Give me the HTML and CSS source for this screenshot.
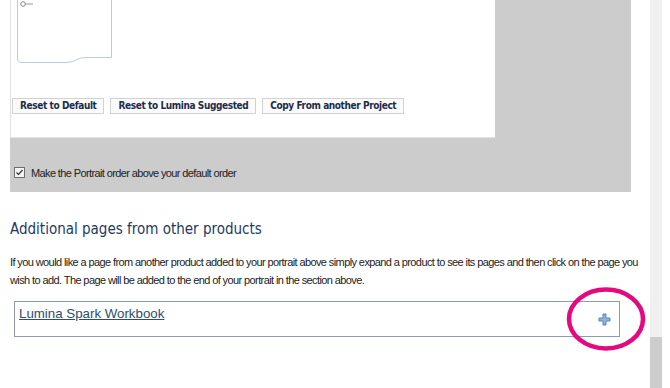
FILE: index.html
```html
<!DOCTYPE html>
<html>
<head>
<meta charset="utf-8">
<link rel="stylesheet" href="styles.css">
</head>
<body>
<div class="page">
  <div class="main">
    <div class="grey-panel">
      <div class="white-box">
        <div class="thumb">
          <svg width="97" height="64" viewBox="0 0 97 64">
            <path d="M1.5 0 V58 Q1.5 62.5 6 62.5 H50 Q57 62.5 61 59.5 Q65 57.5 70 57.5 H95.5 V0" fill="#fff" stroke="#bfcad4" stroke-width="1"/>
            <circle cx="7" cy="4" r="2.3" fill="none" stroke="#8a8a8a" stroke-width="1"/>
            <line x1="9" y1="4" x2="17" y2="4" stroke="#9a9a9a" stroke-width="1"/>
          </svg>
        </div>
        <div class="btn-row">
          <button class="btn">Reset to Default</button>
          <button class="btn">Reset to Lumina Suggested</button>
          <button class="btn">Copy From another Project</button>
        </div>
      </div>
      <label class="check-row">
        <span class="checkbox">
          <svg width="9" height="9" viewBox="0 0 9 9"><path d="M1.5 4.5 L3.5 6.5 L7.5 2" fill="none" stroke="#333" stroke-width="1.2"/></svg>
        </span>
        <span class="check-text">Make the Portrait order above your default order</span>
      </label>
    </div>

    <h2 class="heading">Additional pages from other products</h2>
    <p class="intro">If you would like a page from another product added to your portrait above simply expand a product to see its pages and then click on the page you wish to add. The page will be added to the end of your portrait in the section above.</p>

    <div class="product">
      <a class="product-link" href="#">Lumina Spark Workbook</a>
      <span class="plus-wrap">
        <svg class="plus" width="13" height="13" viewBox="0 0 13 13">
          <path d="M5 1 H8 V5 H12 V8 H8 V12 H5 V8 H1 V5 H5 Z" fill="#8fb3da" stroke="#5d86b5" stroke-width="1"/>
        </svg>
        <svg class="ring" width="82" height="66" viewBox="0 0 82 66">
          <ellipse cx="41" cy="33" rx="37" ry="29.5" fill="none" stroke="#e5097f" stroke-width="4.5"/>
        </svg>
      </span>
    </div>
  </div>
  <div class="scrollbar"><div class="thumb-bar"></div></div>
</div>
</body>
</html>
```

FILE: styles.css
```css
html, body {
  margin: 0;
  padding: 0;
  background: #fff;
}
.page {
  display: flex;
  width: 670px;
  height: 388px;
  overflow: hidden;
}
.main {
  width: 640px;
  padding-left: 10px;
}
.grey-panel {
  width: 621px;
  height: 192px;
  background: #cccccc;
}
.white-box {
  width: 485px;
  height: 138px;
  background: #fff;
  border-left: 1px solid #e2e2e2;
  border-bottom: 1px solid #e4e4e4;
  box-sizing: border-box;
}
.thumb {
  padding-left: 5px;
  height: 64px;
}
.thumb svg { display: block; }
.btn-row {
  display: flex;
  gap: 6px;
  padding-left: 1px;
  margin-top: 34px;
}
.btn {
  font-family: "DejaVu Sans Condensed", "DejaVu Sans", sans-serif;
  font-weight: bold;
  font-size: 10px;
  letter-spacing: -0.4px;
  color: #1b2c4c;
  background: #fbfbfb;
  border: 1px solid #d2d2d2;
  padding: 0 7px 0 7px;
  height: 16px;
  line-height: 14px;
  margin: 0;
}
.check-row {
  display: flex;
  align-items: center;
  gap: 6px;
  padding: 28px 0 0 4px;
}
.checkbox {
  width: 9px;
  height: 9px;
  border: 1px solid #6f6f6f;
  background: #f4f4f4;
  display: flex;
}
.check-text {
  font-family: "Liberation Sans", Arial, sans-serif;
  font-size: 11px;
  letter-spacing: -0.62px;
  color: #222;
  margin-top: 1px;
}
.heading {
  font-family: "DejaVu Sans Condensed", "DejaVu Sans", sans-serif;
  font-weight: normal;
  font-size: 15px;
  color: #1d3a63;
  margin: 25px 0 0 0;
  line-height: 24px;
}
.intro {
  font-family: "Liberation Sans", Arial, sans-serif;
  font-size: 11px;
  letter-spacing: -0.6px;
  line-height: 18px;
  color: #222;
  margin: 12px 0 0 0;
  width: 630px;
}
.product {
  display: flex;
  justify-content: space-between;
  align-items: center;
  width: 606px;
  height: 36px;
  box-sizing: border-box;
  margin: 12px 0 0 4px;
  border: 1px solid #8a9cb0;
  padding: 0 8px 0 4px;
}
.product-link {
  font-family: "Liberation Sans", Arial, sans-serif;
  font-size: 13.3px;
  color: #2b4e72;
  align-self: flex-start;
  margin-top: 4px;
}
.plus-wrap {
  position: relative;
  width: 13px;
  height: 13px;
  margin-top: 1px;
}
.plus { display: block; }
.ring {
  position: absolute;
  left: -33px;
  top: -27px;
}
.scrollbar {
  width: 12px;
  height: 388px;
  background: #f0f0f0;
  display: flex;
  flex-direction: column;
  justify-content: flex-end;
}
.thumb-bar {
  height: 51px;
  background: #cdcdcd;
}
```
